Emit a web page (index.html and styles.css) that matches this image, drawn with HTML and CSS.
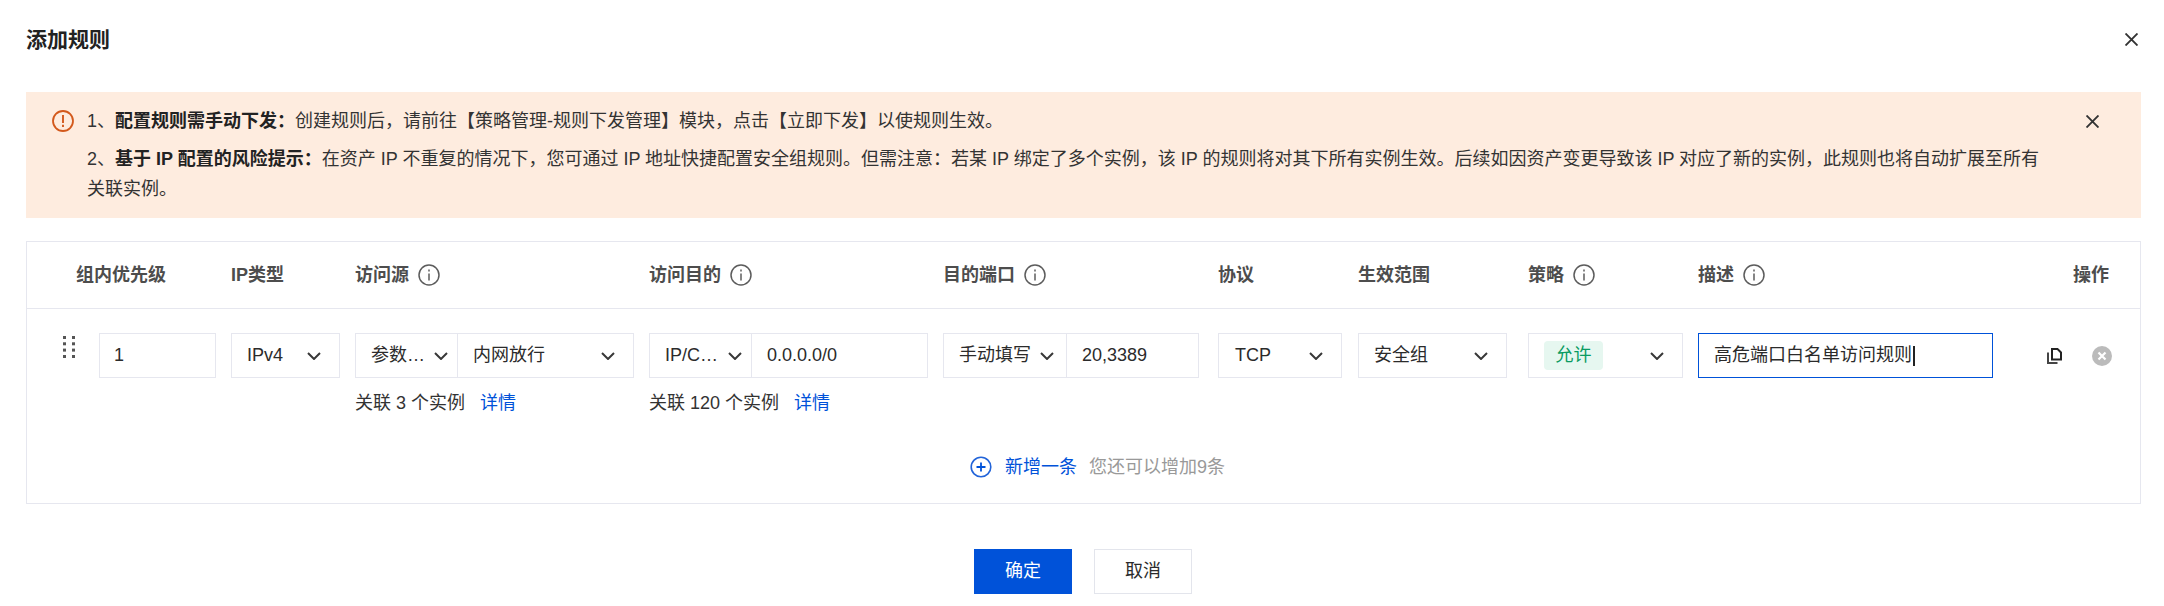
FILE: index.html
```html
<!DOCTYPE html>
<html lang="zh-CN">
<head>
<meta charset="utf-8">
<title>添加规则</title>
<link rel="stylesheet" href="styles.css">
</head>
<body>
<div class="dialog">
  <header class="dialog-head">
    <h1 class="dialog-title">添加规则</h1>
    <svg class="close" viewBox="0 0 13 13"><path d="M.5 .5l12 12M12.500 .5l-12 12"/></svg>
  </header>

  <section class="alert">
    <svg class="alert-icon" viewBox="0 0 22 22"><circle cx="11" cy="11" r="10"/><path d="M11 5v8"/><path d="M11 14.800v2.200"/></svg>
    <div class="alert-body">
      <p class="alert-line">1、<b>配置规则需手动下发：</b>创建规则后，请前往【策略管理-规则下发管理】模块，点击【立即下发】以使规则生效。</p>
      <p class="alert-line">2、<b>基于 IP 配置的风险提示：</b>在资产 IP 不重复的情况下，您可通过 IP 地址快捷配置安全组规则。但需注意：若某 IP 绑定了多个实例，该 IP 的规则将对其下所有实例生效。后续如因资产变更导致该 IP 对应了新的实例，此规则也将自动扩展至所有关联实例。</p>
    </div>
    <svg class="close alert-close" viewBox="0 0 13 13"><path d="M.5 .5l12 12M12.500 .5l-12 12"/></svg>
  </section>

  <section class="table">
    <div class="grid head">
      <div class="th th-first">组内优先级</div>
      <div class="th">IP类型</div>
      <div class="th">访问源<svg class="info" viewBox="0 0 22 22"><circle cx="11" cy="11" r="10"/><path d="M11 9.500v7"/><path d="M11 5.500v2"/></svg></div>
      <div class="th">访问目的<svg class="info" viewBox="0 0 22 22"><circle cx="11" cy="11" r="10"/><path d="M11 9.500v7"/><path d="M11 5.500v2"/></svg></div>
      <div class="th">目的端口<svg class="info" viewBox="0 0 22 22"><circle cx="11" cy="11" r="10"/><path d="M11 9.500v7"/><path d="M11 5.500v2"/></svg></div>
      <div class="th">协议</div>
      <div class="th">生效范围</div>
      <div class="th">策略<svg class="info" viewBox="0 0 22 22"><circle cx="11" cy="11" r="10"/><path d="M11 9.500v7"/><path d="M11 5.500v2"/></svg></div>
      <div class="th">描述<svg class="info" viewBox="0 0 22 22"><circle cx="11" cy="11" r="10"/><path d="M11 9.500v7"/><path d="M11 5.500v2"/></svg></div>
      <div class="th th-last">操作</div>
    </div>

    <div class="grid row">
      <div class="td td-first">
        <svg class="drag" viewBox="0 0 12 22"><rect width="3" height="3"/><rect x="9" width="3" height="3"/><rect y="6.300" width="3" height="3"/><rect x="9" y="6.300" width="3" height="3"/><rect y="12.600" width="3" height="3"/><rect x="9" y="12.600" width="3" height="3"/><rect y="19" width="3" height="3"/><rect x="9" y="19" width="3" height="3"/></svg>
        <div class="ctl w-priority">1</div>
      </div>
      <div class="td">
        <div class="ctl select w-ip"><span>IPv4</span><svg class="chev" viewBox="0 0 14 8"><path d="M1 1l6 6 6-6"/></svg></div>
      </div>
      <div class="td">
        <div class="group w-source">
          <div class="seg select seg-short"><span>参数…</span><svg class="chev" viewBox="0 0 14 8"><path d="M1 1l6 6 6-6"/></svg></div>
          <div class="seg select seg-fill seg-wide"><span>内网放行</span><svg class="chev" viewBox="0 0 14 8"><path d="M1 1l6 6 6-6"/></svg></div>
        </div>
        <p class="note">关联 3 个实例<a class="link">详情</a></p>
      </div>
      <div class="td">
        <div class="group w-dest">
          <div class="seg select seg-short"><span>IP/C…</span><svg class="chev" viewBox="0 0 14 8"><path d="M1 1l6 6 6-6"/></svg></div>
          <div class="seg seg-fill seg-value">0.0.0.0/0</div>
        </div>
        <p class="note">关联 120 个实例<a class="link">详情</a></p>
      </div>
      <div class="td">
        <div class="group w-port">
          <div class="seg select seg-port"><span>手动填写</span><svg class="chev" viewBox="0 0 14 8"><path d="M1 1l6 6 6-6"/></svg></div>
          <div class="seg seg-fill seg-value">20,3389</div>
        </div>
      </div>
      <div class="td">
        <div class="ctl select w-proto"><span>TCP</span><svg class="chev" viewBox="0 0 14 8"><path d="M1 1l6 6 6-6"/></svg></div>
      </div>
      <div class="td">
        <div class="ctl select w-scope"><span>安全组</span><svg class="chev" viewBox="0 0 14 8"><path d="M1 1l6 6 6-6"/></svg></div>
      </div>
      <div class="td">
        <div class="ctl select w-strategy"><span class="tag">允许</span><svg class="chev" viewBox="0 0 14 8"><path d="M1 1l6 6 6-6"/></svg></div>
      </div>
      <div class="td">
        <div class="ctl w-desc"><span>高危端口白名单访问规则</span><i class="caret"></i></div>
      </div>
      <div class="td td-actions">
        <svg class="copy" viewBox="0 0 15 16"><path class="copy-back" d="M1 4.500V15h9.500"/><path class="copy-front" d="M5 1h5.500L14 4.500V11.500H5z"/></svg>
        <svg class="remove" viewBox="0 0 20 20"><circle cx="10" cy="10" r="10"/><path d="M6.500 6.500l7 7M13.500 6.500l-7 7"/></svg>
      </div>
    </div>

    <div class="add-row">
      <svg class="add-icon" viewBox="0 0 22 22"><circle cx="11" cy="11" r="9.800"/><path d="M11 6.500v9M6.500 11h9"/></svg>
      <a class="add-link">新增一条</a>
      <span class="add-hint">您还可以增加9条</span>
    </div>
  </section>

  <footer class="foot">
    <button class="btn btn-primary" type="button">确定</button>
    <button class="btn" type="button">取消</button>
  </footer>
</div>
</body>
</html>
```
FILE: styles.css
```css
* { box-sizing: border-box; }
html, body { margin: 0; padding: 0; background: #fff; }
body {
  font-family: "Liberation Sans", "Noto Sans CJK SC", sans-serif;
  font-size: 18px;
  line-height: 30.7px;
  color: #2b2b2b;
}
p, h1 { margin: 0; }
svg { display: block; flex: none; }

.dialog { padding: 0 23px 0 26px; }

.dialog-head {
  height: 80px;
  margin-bottom: 12px;
  padding-right: 3px;
  display: flex;
  align-items: center;
  justify-content: space-between;
}
.dialog-title { font-size: 21px; font-weight: 700; color: #222; line-height: 30px; }
.close { width: 13px; height: 13px; margin-top: -2px; }
.close path { fill: none; stroke: #333; stroke-width: 1.900; }

.alert {
  height: 126px;
  background: #feecdf;
  padding: 14px 0 0 26px;
  display: flex;
  align-items: flex-start;
}
.alert-icon { width: 22px; height: 22px; margin-top: 4px; }
.alert-icon circle { fill: none; stroke: #d3591c; stroke-width: 1.800; }
.alert-icon path { fill: none; stroke: #d3591c; stroke-width: 1.900; }
.alert-body { width: 1960px; margin-left: 13px; color: #333; }
.alert-line + .alert-line { margin-top: 7px; }
.alert-line b { font-weight: 700; color: #222; }
.alert-close { margin: 9px 0 0 39px; }

.table {
  margin-top: 23px;
  height: 263px;
  border: 1px solid #e6e7ef;
}
.grid {
  display: grid;
  grid-template-columns: 204px 124px 294px 294px 275px 140px 170px 170px 295px 147px;
}
.head { height: 67px; border-bottom: 1px solid #e6e7ef; align-items: center; }
.th {
  display: flex;
  align-items: center;
  gap: 9px;
  font-weight: 700;
  color: #4d4d4d;
}
.th-first { padding-left: 49px; }
.th-last { justify-content: flex-end; padding-right: 31px; }
.info { width: 22px; height: 22px; }
.info circle, .info path { fill: none; stroke: #5c5c5c; stroke-width: 1.500; }

.row { padding-top: 24px; height: 110px; }
.td-first { display: flex; padding-left: 36px; align-items: flex-start; }
.drag { width: 12px; height: 22px; margin-top: 3px; margin-right: 24px; fill: #555; }

.ctl {
  height: 45px;
  border: 1px solid #e6e7ef;
  padding: 0 15px;
  display: flex;
  align-items: center;
}
.select { justify-content: space-between; padding-right: 18px; }
.chev { width: 14px; height: 8px; }
.chev path { fill: none; stroke: #383838; stroke-width: 2; }

.w-priority { width: 117px; padding-left: 14px; }
.w-ip { width: 109px; }
.w-proto { width: 124px; padding-left: 16px; }
.w-scope { width: 149px; padding-left: 15px; }
.w-strategy { width: 155px; }
.w-desc {
  width: 295px;
  border-color: #0052d9;
}
.w-source { width: 279px; }
.w-dest { width: 279px; }
.w-port { width: 256px; }

.group {
  height: 45px;
  display: flex;
  border: 1px solid #e6e7ef;
}
.seg { display: flex; align-items: center; height: 43px; padding: 0 15px; white-space: nowrap; }
.seg-short { width: 102px; padding-right: 9px; border-right: 1px solid #e6e7ef; }
.seg-port { width: 123px; padding-right: 12px; border-right: 1px solid #e6e7ef; }
.seg-wide { padding-right: 18px; }
.seg-fill { flex: 1; }

.tag {
  width: 59px;
  height: 29px;
  border-radius: 4px;
  background: #e6f7f0;
  color: #0a9c62;
  display: flex;
  align-items: center;
  justify-content: center;
}
.caret { width: 2px; height: 20px; background: #222; margin-left: 1px; }

.note { margin-top: 10px; color: #333; white-space: nowrap; }
.link { color: #0052d9; margin-left: 15px; }

.td-actions { display: flex; align-items: center; height: 45px; padding-left: 54px; gap: 30px; }
.copy { width: 15px; height: 16px; }
.copy-back { fill: none; stroke: #444; stroke-width: 2; }
.copy-front { fill: #fff; stroke: #222; stroke-width: 2; }
.remove { width: 20px; height: 20px; }
.remove circle { fill: #bbb; }
.remove path { fill: none; stroke: #fff; stroke-width: 2.200; }

.add-row {
  height: 30px;
  margin-top: 33px;
  padding-left: 28px;
  display: flex;
  align-items: center;
  justify-content: center;
}
.add-icon { width: 22px; height: 22px; margin-right: 13px; }
.add-icon circle { fill: none; stroke: #2264d9; stroke-width: 1.600; }
.add-icon path { fill: none; stroke: #0052d9; stroke-width: 1.800; }
.add-link { color: #0052d9; margin-right: 12px; }
.add-hint { color: #999; }

.foot {
  margin-top: 45px;
  padding-right: 1px;
  display: flex;
  justify-content: center;
  gap: 22px;
}
.btn {
  width: 98px;
  height: 45px;
  border: 1px solid #e3e5ec;
  background: #fff;
  color: #2b2b2b;
  font: inherit;
  padding: 0;
  box-shadow: 0 2px 0 #f5f6fa;
}
.btn-primary { background: #0052d9; border-color: #0052d9; color: #fff; }
```
